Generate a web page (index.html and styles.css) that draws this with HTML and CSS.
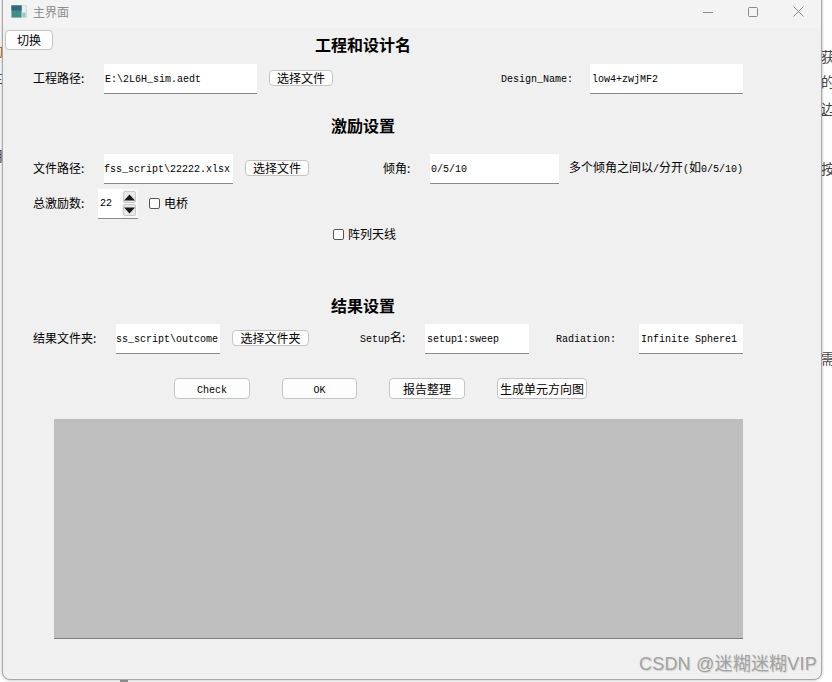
FILE: index.html
```html
<!DOCTYPE html>
<html lang="zh">
<head>
<meta charset="utf-8">
<title>主界面</title>
<link rel="stylesheet" href="styles.css">
</head>
<body>
<div class="backdrop">
  <span class="bg-char bg-r1">获</span>
  <span class="bg-char bg-r2">的</span>
  <span class="bg-char bg-r3">边</span>
  <span class="bg-char bg-r4">按</span>
  <span class="bg-char bg-r5">需</span>
  <span class="bg-char bg-l1">动</span>
  <span class="bg-char bg-l2">主</span>
  <span class="bg-char bg-l3">用</span>
  <span class="bg-stub"></span>
</div>
<main class="window">
  <header class="titlebar">
    <svg class="app-icon" width="16" height="13" viewBox="0 0 16 13">
      <rect width="16" height="13" fill="#d5dcdc"/>
      <rect x="0.5" y="0.5" width="10" height="12" fill="#3f8f88"/>
      <rect x="0.5" y="0.5" width="10" height="5" fill="#35667f"/>
      <rect x="11.5" y="1" width="3" height="6" fill="#eef2f2"/>
      <rect x="11.5" y="8" width="3" height="4" fill="#9fc4bb"/>
    </svg>
    <span class="title-text">主界面</span>
    <div class="controls">
      <svg width="10" height="10" viewBox="0 0 10 10"><path d="M0 5.5H10" stroke="#8a8a8a" fill="none"/></svg>
      <svg width="10" height="10" viewBox="0 0 10 10"><rect x="0.5" y="0.5" width="9" height="9" rx="1" stroke="#8a8a8a" fill="none"/></svg>
      <svg width="11" height="11" viewBox="0 0 11 11"><path d="M0.5 0.5L10.5 10.5M10.5 0.5L0.5 10.5" stroke="#8a8a8a" fill="none"/></svg>
    </div>
  </header>

  <div class="toprow">
    <button class="btn btn-switch">切换</button>
    <h2 class="heading heading-top">工程和设计名</h2>
  </div>

  <div class="row">
    <label class="lab w71">工程路径:</label>
    <input class="field w153 tight" value="E:\2L6H_sim.aedt">
    <button class="btn btn-file w64">选择文件</button>
    <label class="lab lab-design"><span class="m">Design_Name:</span></label>
    <input class="field w153" value="low4+zwjMF2">
  </div>

  <h2 class="heading heading-mid h-stim">激励设置</h2>

  <div class="row row-stim">
    <label class="lab w71">文件路径:</label>
    <input class="field w129 flush" value="fss_script\22222.xlsx">
    <button class="btn btn-file w64">选择文件</button>
    <label class="lab lab-tilt">倾角:</label>
    <input class="field w129 tight" value="0/5/10">
    <span class="lab hint">多个倾角之间以<span class="m">/</span>分开<span class="m">(</span>如<span class="m">0/5/10)</span></span>
  </div>

  <div class="row row-count">
    <label class="lab w65">总激励数:</label>
    <div class="spin">
      <span class="spin-value">22</span>
      <div class="spin-btns">
        <span class="spin-btn"><svg width="11" height="7" viewBox="0 0 11 7"><path d="M5.5 0.5L11 6.5H0Z" fill="#1a1a1a"/></svg></span>
        <span class="spin-btn"><svg width="11" height="7" viewBox="0 0 11 7"><path d="M0 0.5H11L5.5 6.5Z" fill="#1a1a1a"/></svg></span>
      </div>
    </div>
    <label class="check check-bridge"><input type="checkbox"><span class="lab">电桥</span></label>
  </div>

  <div class="row row-array">
    <label class="check"><input type="checkbox"><span class="lab">阵列天线</span></label>
  </div>

  <h2 class="heading heading-mid h-result">结果设置</h2>

  <div class="row row-result">
    <label class="lab w83">结果文件夹:</label>
    <input class="field w104 flush" value="ss_script\outcome">
    <button class="btn btn-file w77">选择文件夹</button>
    <label class="lab lab-setup"><span class="m">Setup</span>名:</label>
    <input class="field w104" value="setup1:sweep">
    <label class="lab lab-rad"><span class="m">Radiation:</span></label>
    <input class="field w104" value="Infinite Sphere1">
  </div>

  <div class="actions">
    <button class="btn btn-act w76"><span class="m">Check</span></button>
    <button class="btn btn-act w75"><span class="m">OK</span></button>
    <button class="btn btn-act w76">报告整理</button>
    <button class="btn btn-act w90">生成单元方向图</button>
  </div>

  <div class="panel"></div>
</main>
<div class="watermark">CSDN @迷糊迷糊VIP</div>
</body>
</html>
```
FILE: styles.css
```css
* { box-sizing: border-box; }
html, body { margin: 0; padding: 0; }
body {
  width: 832px;
  height: 682px;
  overflow: hidden;
  background: #fff;
  position: relative;
  font-family: "Noto Sans CJK SC", sans-serif;
  color: #000;
}
.backdrop { position: absolute; inset: 0; }
.bg-char { position: absolute; font-size: 14px; line-height: 16px; color: #444; }
.bg-r1 { left: 821px; top: 48px; }
.bg-r2 { left: 821px; top: 73px; }
.bg-r3 { left: 821px; top: 100px; text-decoration: underline; }
.bg-r4 { left: 821px; top: 160px; }
.bg-r5 { left: 821px; top: 350px; }
.bg-l1 { left: -11px; top: 42px; color: #b5651d; }
.bg-l2 { left: -11px; top: 69px; }
.bg-l3 { left: -11px; top: 147px; }
.bg-stub { position: absolute; left: 120px; top: 679px; width: 8px; height: 3px; background: #999; }

.window {
  position: absolute;
  left: 2px;
  top: -8px;
  width: 820px;
  height: 688px;
  padding-top: 8px;
  background: #f0f0f0;
  border: 1px solid #a8a8a8;
  border-radius: 8px;
  box-shadow: 0 0 3px rgba(0, 0, 0, 0.35);
  overflow: hidden;
}
.titlebar {
  height: 28px;
  margin-top: -1px;
  background: #f3f3f3;
  display: flex;
  align-items: center;
  padding-left: 8px;
  padding-bottom: 5px;
}
.app-icon { display: block; }
.title-text { margin-left: 6px; font-size: 12px; line-height: 16px; color: #8c8c8c; }
.controls {
  margin-left: auto;
  margin-right: 17px;
  display: flex;
  align-items: center;
  gap: 35px;
}

.m { font-family: "Liberation Mono", monospace; font-size: 10px; }
.lab { font-size: 12px; line-height: 16px; white-space: nowrap; display: block; margin-top: -2px; }

.btn {
  display: block;
  padding: 0;
  margin: 0;
  background: #fdfdfd;
  border: 1px solid #c4c4c4;
  border-radius: 4px;
  font-family: "Noto Sans CJK SC", sans-serif;
  font-size: 12px;
  color: #000;
  white-space: nowrap;
}
.btn-switch { width: 48px; height: 20px; margin-left: 2px; margin-top: 2px; line-height: 16px; }
.btn-file { height: 16px; line-height: 14px; margin-left: 12px; margin-top: -3px; }
.btn-act { height: 21px; line-height: 18px; }

.toprow { display: flex; height: 36px; align-items: flex-start; }
.heading { margin: 0; font-size: 16px; font-weight: 700; line-height: 20px; white-space: nowrap; }
.heading-top { margin-left: 262px; margin-top: 6px; }
.heading-mid { padding-left: 30px; width: 690px; text-align: center; }
.h-stim { margin-top: 21px; }
.h-result { margin-top: 45px; }

.row { display: flex; align-items: center; height: 30px; padding-left: 30px; }
.row-stim { margin-top: 19px; }
.row-count { margin-top: 5px; }
.row-array { margin-top: 1px; padding-left: 330px; height: 30px; }
.row-result { margin-top: 9px; }

.field {
  display: block;
  height: 30px;
  padding: 2px 2px 0;
  border: 0;
  border-bottom: 1px solid #8a8a8a;
  border-radius: 0;
  outline: none;
  background: #fff;
  font-family: "Liberation Mono", monospace;
  font-size: 10px;
  color: #000;
}
.tight { padding-left: 1px; }
.flush { padding-left: 0; }
.w153 { width: 153px; }
.w129 { width: 129px; }
.w104 { width: 104px; }
.w76 { width: 76px; }
.w75 { width: 75px; }
.w90 { width: 90px; }
.w77 { width: 77px; }
.w71 { width: 71px; }
.w65 { width: 65px; }
.w64 { width: 64px; }
.w83 { width: 83px; }

.lab-design { margin-left: 168px; width: 89px; }
.lab-tilt { margin-left: 74px; width: 47px; }
.hint { margin-left: 10px; }
.lab-setup { margin-left: 51px; width: 65px; }
.lab-rad { margin-left: 27px; width: 83px; }

.spin {
  width: 40px;
  height: 30px;
  display: flex;
  background: #f8f8f8;
  border-bottom: 1px solid #8a8a8a;
}
.spin-value {
  width: 24px;
  background: #fff;
  padding-left: 2px;
  line-height: 29px;
  font-family: "Liberation Mono", monospace;
  font-size: 10px;
}
.spin-btns { display: flex; flex-direction: column; gap: 1px; padding: 2px 2px 0 1px; }
.spin-btn {
  width: 13px;
  height: 12px;
  background: #e8e8e8;
  border: 1px solid #c9c9c9;
  border-radius: 2px;
  display: flex;
  align-items: center;
  justify-content: center;
}
.spin-btn svg { display: block; }

.check { display: flex; align-items: center; gap: 4px; }
.check input {
  appearance: none;
  -webkit-appearance: none;
  display: block;
  width: 11px;
  height: 11px;
  margin: -2px 0 0;
  background: #fff;
  border: 1px solid #555;
  border-radius: 2px;
}
.check-bridge { margin-left: 11px; }

.actions { display: flex; gap: 32px; margin-top: 24px; padding-left: 171px; }
.panel {
  margin-top: 20px;
  margin-left: 51px;
  width: 689px;
  height: 220px;
  background: #bebebe;
  border-bottom: 1px solid #7d7d7d;
}
.watermark {
  position: absolute;
  left: 639px;
  top: 652px;
  font-family: "Liberation Sans", "Noto Sans CJK SC", sans-serif;
  font-size: 18px;
  letter-spacing: 0.2px;
  line-height: 24px;
  color: #a2a2a2;
  text-shadow: 1px 1px 1px rgba(0, 0, 0, 0.12);
  white-space: nowrap;
}
```
